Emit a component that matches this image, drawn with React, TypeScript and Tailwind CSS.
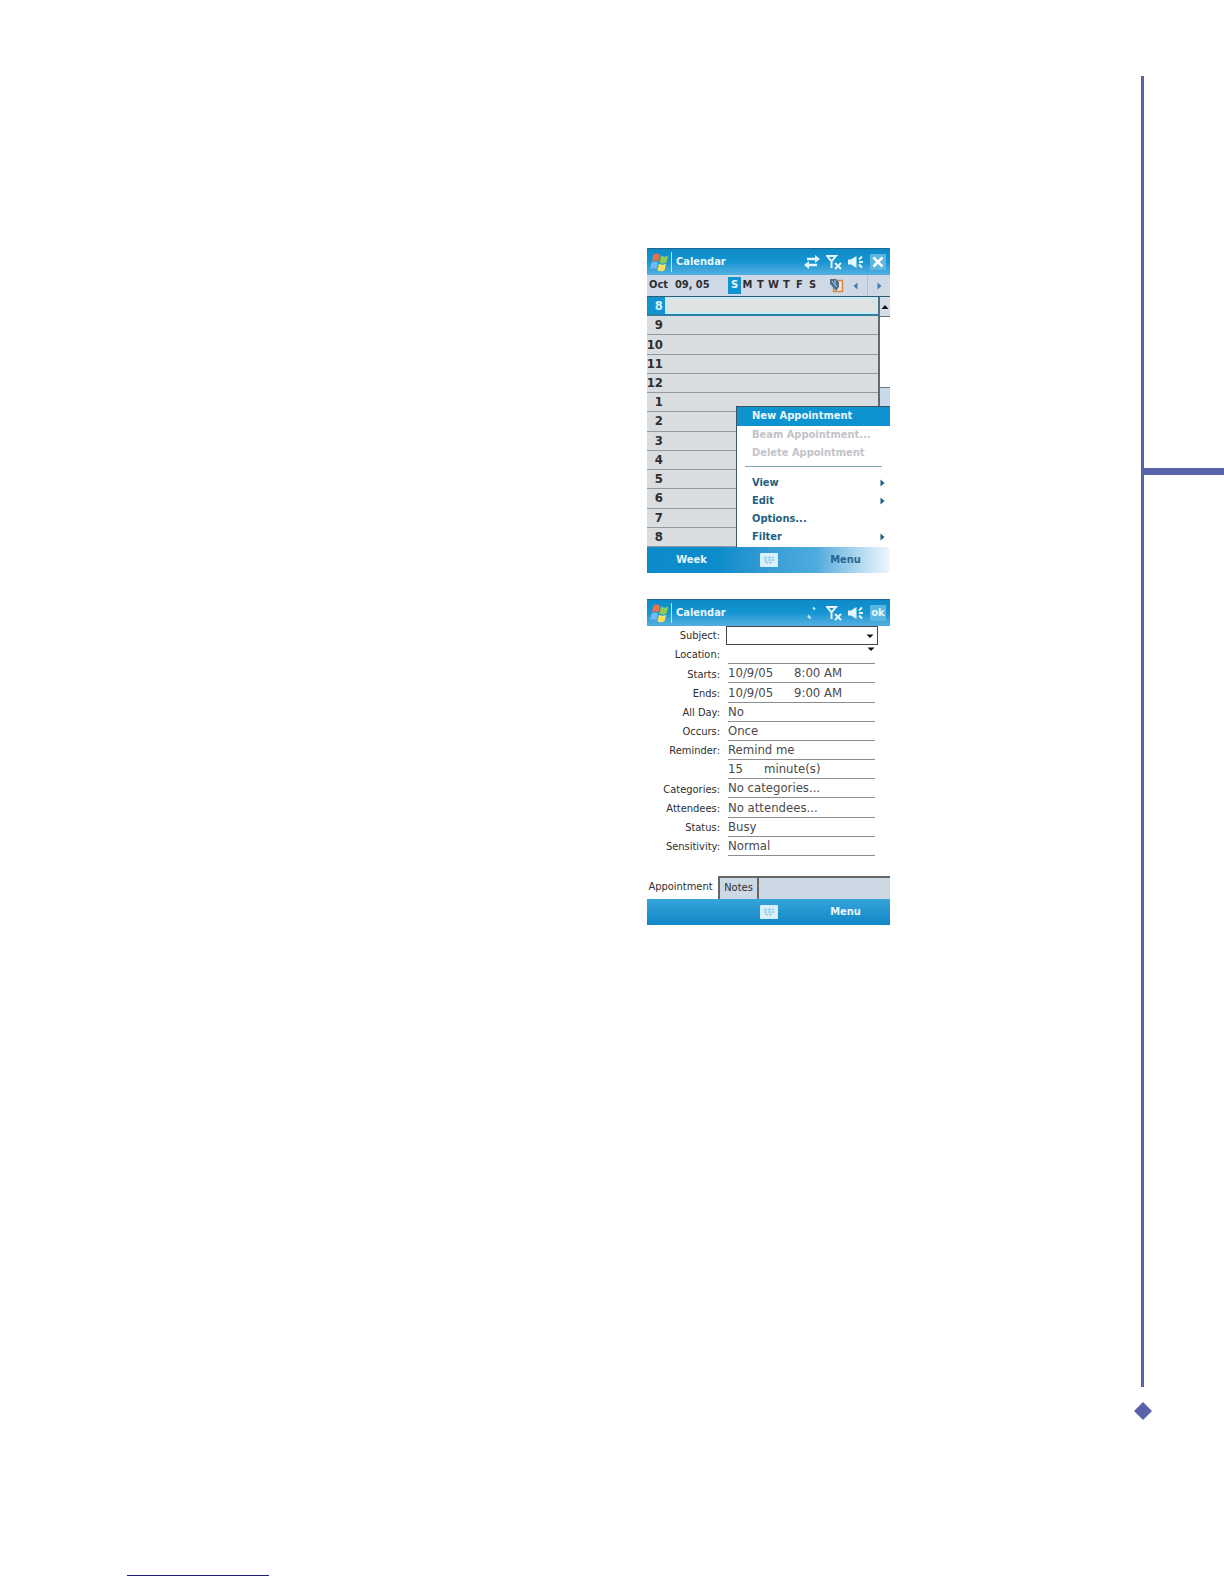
import type { ReactNode } from 'react'

const hours = ['8', '9', '10', '11', '12', '1', '2', '3', '4', '5', '6', '7', '8']
const days = ['S', 'M', 'T', 'W', 'T', 'F', 'S']

const WindowsFlag = () => (
  <svg width="19" height="20" viewBox="0 0 19 20" aria-hidden="true">
    <path d="M3.500 2.500C5.500 1 8 1 10 2.500L8.300 9.500C6.300 8 4 8 2 9.500Z" fill="#ee7045" />
    <path d="M11 3.500C13.200 5 15.800 5 18.300 3.500L16.500 10.500C14 12 11.600 12 9.300 10.500Z" fill="#8ecb55" />
    <path d="M1.600 10.700C3.800 9.200 6 9.200 8 10.700L6.400 17.300C4.400 15.800 2.200 15.800 0 17.300Z" fill="#6fbcf0" />
    <path d="M9 11.700C11.200 13.200 13.600 13.200 16.200 11.700L14.500 18.200C12 19.700 9.700 19.700 7.400 18.200Z" fill="#fbe05a" />
  </svg>
)

const ConnectionIcon = () => (
  <svg width="16" height="14" viewBox="0 0 16 14" fill="#e4f5fc" aria-hidden="true">
    <path d="M3 2.800H11V0L16 4L11 8V5.200H3ZM13 8.800H5V6L0 10L5 14V11.200H13Z" />
  </svg>
)

const SyncIcon = () => (
  <svg width="16" height="14" viewBox="0 0 16 14" fill="none" stroke="#c9ebf8" strokeWidth="2" aria-hidden="true">
    <path d="M9 1.500L11 3.500M4 9.500L6.500 12.500" />
  </svg>
)

const SignalIcon = () => (
  <svg width="16" height="16" viewBox="0 0 16 16" fill="none" stroke="#e4f5fc" strokeWidth="2" aria-hidden="true">
    <path d="M1 2H10L5.500 7.500ZM5.500 7V14M9 9L15 15M15 9L9 15" />
  </svg>
)

const SpeakerIcon = () => (
  <svg width="16" height="14" viewBox="0 0 16 14" fill="#e4f5fc" aria-hidden="true">
    <path d="M0 4.500H3L8.500 1V13L3 9.500H0Z" />
    <path d="M11 4.500L14 1.500M11 7H15M11 9.500L14 12.500" stroke="#e4f5fc" strokeWidth="2" />
  </svg>
)

const KeyboardIcon = () => (
  <svg width="18" height="14" viewBox="0 0 18 14" aria-hidden="true">
    <rect width="18" height="14" rx="1" fill="#d9f0fb" />
    <path d="M4 4.500H14M4 7H14M5 9.500H13" stroke="#8fc9e8" strokeWidth="1.300" strokeDasharray="3 1" />
  </svg>
)

const ReminderIcon = () => (
  <svg width="15" height="15" viewBox="0 0 15 15" aria-hidden="true">
    <rect x="4.500" y="2.500" width="9" height="11" fill="#f5e3cf" stroke="#d48a3c" strokeWidth="1.500" />
    <path d="M1 1H7L10 4V9L7 13L4 9L1 6Z" fill="#4c6f92" />
    <path d="M3 3L8 9M6 2V8" stroke="#a9c4da" />
  </svg>
)

const Arrow = ({ d, color = '#111' }: { d: string; color?: string }) => (
  <svg width="8" height="8" viewBox="0 0 8 8" fill={color} aria-hidden="true">
    <path d={d} />
  </svg>
)

const DOWN = 'M0.500 2.500H7.500L4 6Z'
const UP = 'M0.500 6H7.500L4 2Z'
const RIGHT = 'M2.500 0.500L6.500 4L2.500 7.500Z'
const LEFT = 'M5.500 0.500L1.500 4L5.500 7.500Z'

const TitleBar = ({ status, action }: { status: ReactNode; action: ReactNode }) => (
  <header className="flex h-[27px] items-center border-t border-[#1c6a94] bg-linear-to-b from-[#0e8ac8] via-[#1595d3] to-[#52b0e0] pr-1 pl-[3px] text-[#e8f7fd]">
    <WindowsFlag />
    <span className="ml-[2px] h-5 w-px bg-[#bfe4f5]" />
    <h2 className="ml-1 flex-1 text-[11px] font-bold">Calendar</h2>
    <div className="flex items-center gap-[6px]">
      {status}
      <SignalIcon />
      <SpeakerIcon />
      {action}
    </div>
  </header>
)

const Screen = ({ children }: { children: ReactNode }) => (
  <section className="flex w-[243px] flex-col bg-white font-['DejaVu_Sans_Condensed','DejaVu_Sans',sans-serif] text-[#2e2e2e]">
    {children}
  </section>
)

interface MenuItem {
  label: string
  state?: 'active' | 'disabled'
  submenu?: boolean
}

const menuTop: MenuItem[] = [
  { label: 'New Appointment', state: 'active' },
  { label: 'Beam Appointment...', state: 'disabled' },
  { label: 'Delete Appointment', state: 'disabled' },
]
const menuBottom: MenuItem[] = [
  { label: 'View', submenu: true },
  { label: 'Edit', submenu: true },
  { label: 'Options...' },
  { label: 'Filter', submenu: true },
]

const MenuButton = ({ label, state, submenu }: MenuItem) => {
  const tone =
    state === 'active'
      ? 'h-[19px] bg-[#0d93cf] text-[#e8f7fd]'
      : state === 'disabled'
        ? 'h-[18px] text-[#c3c3c9]'
        : 'h-[18px] text-[#1f5f80]'
  return (
    <button
      disabled={state === 'disabled'}
      className={`flex w-full items-center justify-between pr-1 pl-[15px] text-[11px] font-bold whitespace-nowrap ${tone}`}
    >
      {label}
      {submenu && <Arrow d={RIGHT} color="#1f5f80" />}
    </button>
  )
}

const DayView = () => (
  <Screen>
    <TitleBar
      status={<ConnectionIcon />}
      action={
        <button aria-label="Close" className="flex size-4 items-center justify-center bg-[#5cb6e2]">
          <svg width="12" height="12" viewBox="0 0 12 12" stroke="#fff" strokeWidth="2.500" aria-hidden="true">
            <path d="M1.500 1.500L10.500 10.500M10.500 1.500L1.500 10.500" />
          </svg>
        </button>
      }
    />
    <div className="flex h-[21px] items-center bg-[#cfd9e6] pl-[2px] text-[11px] font-bold">
      <span className="w-[79px] whitespace-pre">Oct  09, 05</span>
      <div className="flex">
        {days.map((day, i) => (
          <button
            key={i}
            className={i === 0 ? 'h-[17px] w-[13px] bg-[#1193d0] text-[#e8f7fd]' : 'h-[17px] w-[13px]'}
          >
            {day}
          </button>
        ))}
      </div>
      <div className="ml-auto flex h-full items-center">
        <ReminderIcon />
        <button aria-label="Previous day" className="flex h-full w-6 items-center justify-center border-r border-[#b3bfce]">
          <Arrow d={LEFT} color="#3a7fae" />
        </button>
        <button aria-label="Next day" className="flex h-full w-[22px] items-center justify-center">
          <Arrow d={RIGHT} color="#3a7fae" />
        </button>
      </div>
    </div>
    <div className="relative flex h-[251px] border-t border-[#2d5b70]">
      <ol className="grid flex-1 grid-rows-13 bg-[#d9dde0] text-[13px] leading-4 font-bold">
        {hours.map((hour, i) => (
          <li
            key={i}
            className={
              i === 0
                ? 'flex items-center border-b-2 border-[#2d7fa5] bg-[#1193d0] text-[#d5effa]'
                : 'flex items-center border-b border-[#94999d]'
            }
          >
            <span className="flex w-4 justify-end">{hour}</span>
            {i === 0 && <span className="ml-[2px] h-full flex-1 border-2 border-[#c9ebf8] bg-[#dfe2e3]" />}
          </li>
        ))}
      </ol>
      <div className="flex w-3 flex-col border-l-2 border-[#5e6c74]">
        <button aria-label="Scroll up" className="flex h-5 items-center justify-center border-b border-[#5e7482] bg-[#d3dde8]">
          <Arrow d={UP} />
        </button>
        <span className="h-[70px] bg-white" />
        <span className="flex-1 border-t border-[#6e7a84] bg-[#c8d9ea]" />
      </div>
      <div className="absolute right-0 bottom-0 w-[154px] border-t border-l border-[#3c5560] bg-white pb-px">
        {menuTop.map((item) => (
          <MenuButton key={item.label} {...item} />
        ))}
        <hr className="mx-2 mt-1 mb-[7px] border-[#7fa9b4]" />
        {menuBottom.map((item) => (
          <MenuButton key={item.label} {...item} />
        ))}
      </div>
    </div>
    <footer className="grid h-[26px] grid-cols-[89px_1fr_89px] items-center bg-linear-to-r from-[#0d8ccc] from-30% via-[#4fadde] via-70% to-[#f0f8fd] text-[11px] font-bold">
      <button className="text-[#e8f7fd]">Week</button>
      <button aria-label="Keyboard" className="flex justify-center">
        <KeyboardIcon />
      </button>
      <button className="text-[#2a668c]">Menu</button>
    </footer>
  </Screen>
)

const lineClass = 'h-full w-[147px] border-b border-[#8d8d8d] text-[13px] leading-4 text-[#4a4a4a]'

const Row = ({ label, htmlFor, children }: { label?: string; htmlFor?: string; children: ReactNode }) => (
  <div className="flex items-center">
    <label htmlFor={htmlFor} className="w-[73px] pt-[2px] text-right text-[11px] whitespace-nowrap">
      {label}
    </label>
    <div className="ml-2 flex h-full items-center">{children}</div>
  </div>
)

const Picker = ({ id, value }: { id: string; value: string }) => (
  <select id={id} className={`${lineClass} appearance-none`}>
    <option>{value}</option>
  </select>
)

const DateTime = ({ id, date, time }: { id: string; date: string; time: string }) => (
  <div className={`${lineClass} flex`}>
    <input id={id} defaultValue={date} className="w-[66px]" />
    <input aria-label={`${id} time`} defaultValue={time} className="w-[70px]" />
  </div>
)

const AppointmentForm = () => (
  <Screen>
    <TitleBar
      status={<SyncIcon />}
      action={<button className="size-4 bg-[#5cb6e2] text-[11px] leading-4 font-bold">ok</button>}
    />
    <form className="mb-5 grid h-[230px] grid-rows-12">
      <Row label="Subject:" htmlFor="subject">
        <div className="-ml-[2px] flex h-full w-[152px] items-center border border-[#444] pr-[3px]">
          <input id="subject" className="min-w-0 flex-1 text-[13px] leading-4 outline-none" />
          <Arrow d={DOWN} />
        </div>
      </Row>
      <Row label="Location:" htmlFor="location">
        <div className={`${lineClass} flex`}>
          <input id="location" className="min-w-0 flex-1" />
          <Arrow d={DOWN} />
        </div>
      </Row>
      <Row label="Starts:" htmlFor="starts">
        <DateTime id="starts" date="10/9/05" time="8:00 AM" />
      </Row>
      <Row label="Ends:" htmlFor="ends">
        <DateTime id="ends" date="10/9/05" time="9:00 AM" />
      </Row>
      <Row label="All Day:" htmlFor="all-day">
        <Picker id="all-day" value="No" />
      </Row>
      <Row label="Occurs:" htmlFor="occurs">
        <Picker id="occurs" value="Once" />
      </Row>
      <Row label="Reminder:" htmlFor="reminder">
        <Picker id="reminder" value="Remind me" />
      </Row>
      <Row>
        <div className={`${lineClass} flex`}>
          <input aria-label="Reminder amount" defaultValue="15" className="w-9" />
          <select aria-label="Reminder unit" className="appearance-none">
            <option>minute(s)</option>
          </select>
        </div>
      </Row>
      <Row label="Categories:" htmlFor="categories">
        <Picker id="categories" value="No categories..." />
      </Row>
      <Row label="Attendees:" htmlFor="attendees">
        <Picker id="attendees" value="No attendees..." />
      </Row>
      <Row label="Status:" htmlFor="status">
        <Picker id="status" value="Busy" />
      </Row>
      <Row label="Sensitivity:" htmlFor="sensitivity">
        <Picker id="sensitivity" value="Normal" />
      </Row>
    </form>
    <nav className="flex h-[23px] bg-[#cdd8e5] text-[11px]">
      <button className="w-[73px] border-r-2 border-[#666] bg-white pr-1">Appointment</button>
      <button className="w-[39px] border-t-2 border-r-2 border-[#666]">Notes</button>
      <span className="flex-1 border-t-2 border-[#666]" />
    </nav>
    <footer className="grid h-[26px] grid-cols-[89px_1fr_89px] items-center bg-linear-to-b from-[#35a4da] to-[#0d86c6] text-[11px] font-bold text-[#e8f7fd]">
      <span />
      <button aria-label="Keyboard" className="flex justify-center">
        <KeyboardIcon />
      </button>
      <button>Menu</button>
    </footer>
  </Screen>
)

const App = () => (
  <div className="flex min-h-screen flex-col bg-white">
    <div className="flex flex-1">
      <main className="flex flex-1 flex-col items-end gap-[26px] pt-[248px] pr-[251px]">
        <DayView />
        <AppointmentForm />
      </main>
      {/* Chapter rail */}
      <aside className="flex w-[83px] flex-col pt-[76px]">
        <span className="h-[392px] w-[3px] bg-[#5862a8]" />
        <span className="h-[7px] bg-[#5862a8]" />
        <span className="w-[3px] flex-1 bg-[#5862a8]" />
        <svg className="mt-[15px] -ml-[7px]" width="18" height="18" viewBox="0 0 18 18" fill="#5862a8" aria-hidden="true">
          <path d="M9 0L18 9L9 18L0 9Z" />
        </svg>
      </aside>
    </div>
    <footer className="pt-[155px] pb-2 pl-[127px]">
      <div className="h-px w-[142px] bg-[#1d1d80]" />
    </footer>
  </div>
)

export default App
